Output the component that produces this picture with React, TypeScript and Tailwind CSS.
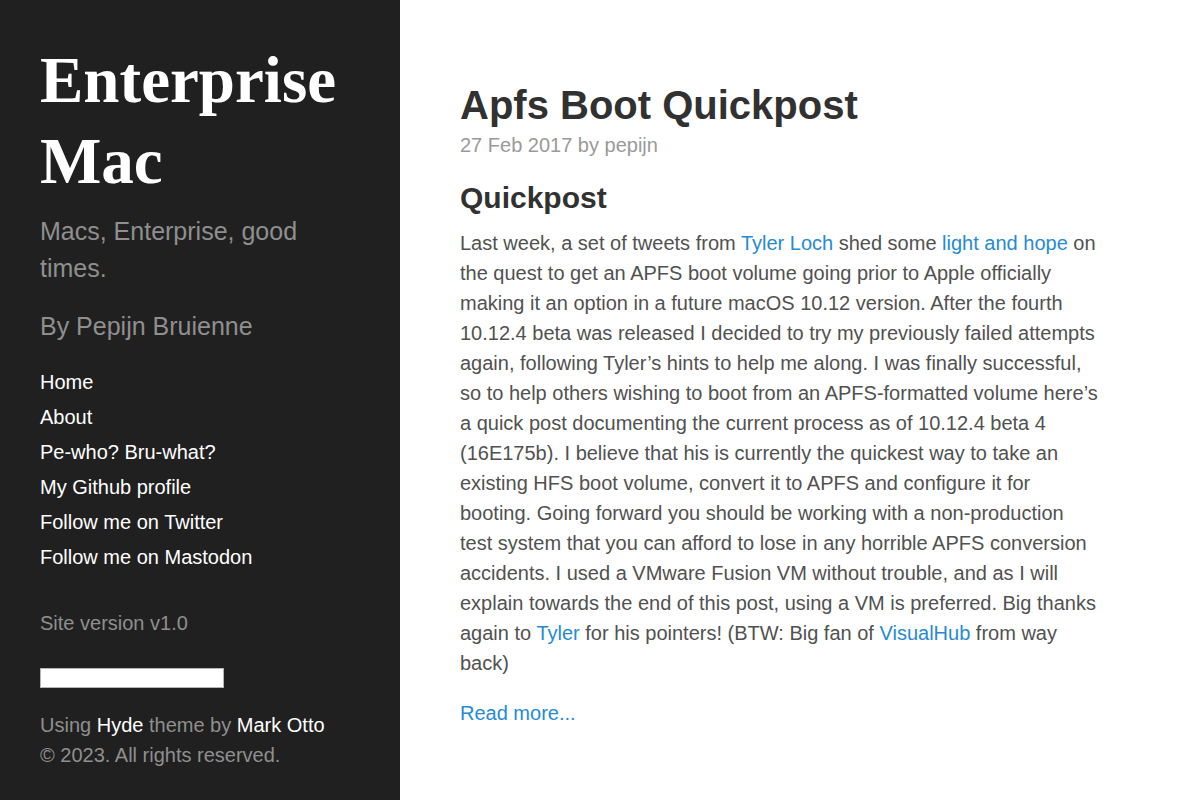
const sans = "font-['Liberation_Sans',Arial,sans-serif]";

const navItems = [
  'Home',
  'About',
  'Pe-who? Bru-what?',
  'My Github profile',
  'Follow me on Twitter',
  'Follow me on Mastodon',
];

function Sidebar() {
  return (
    <aside className={`w-[400px] shrink-0 bg-[#202020] px-[40px] pt-[40px] text-[20px] leading-[30px] text-white/50 ${sans}`}>
      <h1 className="mb-[10px] font-['Liberation_Serif','Times_New_Roman',serif] text-[65px] font-bold leading-[81.25px] text-white">
        Enterprise Mac
      </h1>
      <p className="mb-[20px] text-[25px] leading-[37.5px] text-[#8f8f8f]">Macs, Enterprise, good times.</p>
      <p className="mb-[20px] text-[25px] leading-[37.5px] text-[#8f8f8f]">By Pepijn Bruienne</p>
      <nav className="flex flex-col">
        {navItems.map(item => (
          <a key={item} href="#" className="block leading-[35px] text-white">
            {item}
          </a>
        ))}
      </nav>
      <p className="mt-[33px] text-[#8f8f8f]">Site version v1.0</p>
      <div className="mt-[30px] h-[20px] w-[184px] border border-[#b5b5b5] bg-white" />
      <div className="mt-[22px] text-[#8f8f8f]">
        <p>
          Using <a href="#" className="text-white">Hyde</a> theme by{' '}
          <a href="#" className="text-white">Mark Otto</a>
        </p>
        <p>© 2023. All rights reserved.</p>
      </div>
    </aside>
  );
}

function Link({ children }: { children: React.ReactNode }) {
  return (
    <a href="#" className="text-[#268bd2]">
      {children}
    </a>
  );
}

function Post() {
  return (
    <main className={`flex-1 pl-[60px] pr-[100px] pt-[80px] text-[20px] leading-[30px] text-[#515151] ${sans}`}>
      <article className="w-[640px]">
        <h1 className="text-[40px] font-bold leading-[50px] text-[#313131]">Apfs Boot Quickpost</h1>
        <span className="block text-[#9a9a9a]">27 Feb 2017 by pepijn</span>
        <h2 className="mb-[11px] mt-[19px] text-[30px] font-bold leading-[37.5px] text-[#313131]">Quickpost</h2>
        <p className="mb-[20px]">
          Last week, a set of tweets from <Link>Tyler Loch</Link> shed some <Link>light and hope</Link> on the quest
          to get an APFS boot volume going prior to Apple officially making it an option in a future macOS 10.12
          version. After the fourth 10.12.4 beta was released I decided to try my previously failed attempts again,
          following Tyler’s hints to help me along. I was finally successful, so to help others wishing to boot from
          an APFS-formatted volume here’s a quick post documenting the current process as of 10.12.4 beta 4
          (16E175b). I believe that his is currently the quickest way to take an existing HFS boot volume, convert
          it to APFS and configure it for booting. Going forward you should be working with a non-production test
          system that you can afford to lose in any horrible APFS conversion accidents. I used a VMware Fusion VM
          without trouble, and as I will explain towards the end of this post, using a VM is preferred. Big thanks
          again to <Link>Tyler</Link> for his pointers! (BTW: Big fan of <Link>VisualHub</Link> from way back)
        </p>
        <Link>Read more...</Link>
      </article>
    </main>
  );
}

export default function App() {
  return (
    <div className="flex h-[800px] overflow-hidden bg-white">
      <Sidebar />
      <Post />
    </div>
  );
}
